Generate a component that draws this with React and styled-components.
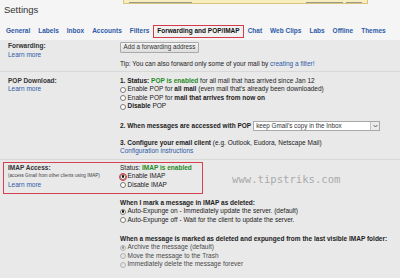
import React from "react"
import styled, { createGlobalStyle } from "styled-components"

const GlobalStyle = createGlobalStyle`
  body {
    margin: 0;
    background: #f5f5f5;
    font-family: "Liberation Sans", Arial, sans-serif;
  }
`

const Page = styled.div`
  position: relative;
  width: 400px;
  height: 278px;
  overflow: hidden;
  background: #f5f5f5;
  color: #222;
  font-size: 6.5px;
  line-height: 8.5px;
`

const NoticeBar = styled.div`
  position: absolute;
  top: 0;
  left: 123px;
  width: 233px;
  height: 3px;
  padding: 0 5px;
  display: flex;
  align-items: flex-end;
  gap: 3px;
  background: #f8eebd;
  border: 1px solid #d9c47e;
  border-top: none;
`

const NoticeButton = styled.span`
  display: block;
  width: ${(p) => p.$w}px;
  height: 1px;
  background: #9a9a8c;
  margin-left: ${(p) => (p.$push ? "auto" : "0")};
`

const Title = styled.h1`
  margin: 4px 0 0 4px;
  font-size: 9.5px;
  line-height: 12px;
  font-weight: normal;
  color: #333;
`

const TabBar = styled.nav`
  display: flex;
  margin: 9px 0 2px 2px;
`

const Tab = styled.a`
  padding: 1.25px 3px;
  border: 1px solid ${(p) => (p.$active ? "#d43b4a" : "transparent")};
  background: ${(p) => (p.$active ? "#f1f1f1" : "transparent")};
  color: ${(p) => (p.$active ? "#111" : "#2d5aa8")};
  font-weight: bold;
  white-space: nowrap;
`

const Panel = styled.div`
  background: #e9e9e9;
  min-height: 240px;
`

const Section = styled.section`
  position: relative;
  display: grid;
  grid-template-columns: 112px 1fr;
  padding: ${(p) => p.$pad || "4px 0 3px 8px"};
  border-bottom: ${(p) => (p.$last ? "none" : "1px solid #d8d8d8")};
`

const Label = styled.div`
  display: flex;
  flex-direction: column;
  font-weight: bold;
  color: #333;
`

const Hint = styled.span`
  font-weight: normal;
  font-size: 4.6px;
  color: #444;
`

const Link = styled.a`
  font-weight: normal;
  color: #2d5aa8;
`

const Body = styled.div`
  display: flex;
  flex-direction: column;
  white-space: nowrap;
`

const Block = styled.div`
  display: flex;
  flex-direction: column;
  margin-top: ${(p) => p.$top || 0}px;
`

const Line = styled.div`
  color: ${(p) => (p.$muted ? "#555" : "#222")};
`

const Strong = styled.b`
  color: ${(p) => (p.$green ? "#1f8a24" : "#222")};
`

const Button = styled.button`
  align-self: flex-start;
  height: 11px;
  width: 79px;
  padding: 0;
  font: inherit;
  font-size: 6.3px;
  color: #333;
  background: linear-gradient(#f4f4f4, #dedede);
  border: 1px solid #a9a9a9;
  border-radius: 1px;
`

const RadioRow = styled.label`
  display: flex;
  align-items: center;
  gap: 1.5px;
  color: ${(p) => (p.$disabled ? "#4a4a4a" : "#222")};
`

const Radio = styled.span`
  box-sizing: border-box;
  display: grid;
  place-items: center;
  width: 6px;
  height: 6px;
  border-radius: 50%;
  border: 1px solid ${(p) => (p.$disabled ? "#b3b3b3" : "#7a7a7a")};
  background: ${(p) => (p.$disabled ? "#e4e4e4" : "#fff")};
  outline: ${(p) => (p.$ring ? "1.3px solid #d4303e" : "none")};
  outline-offset: 0.5px;

  &::after {
    content: "";
    width: 2.6px;
    height: 2.6px;
    border-radius: 50%;
    background: ${(p) => (p.$disabled ? "#999" : "#111")};
    display: ${(p) => (p.$checked ? "block" : "none")};
  }
`

const SelectRow = styled.div`
  display: flex;
  align-items: center;
  gap: 2px;
  height: 10px;
`

const Select = styled.div`
  box-sizing: border-box;
  display: flex;
  width: 127px;
  height: 10px;
  background: #fff;
  border: 1px solid #a8a8a8;
  font-size: 6.3px;
  line-height: 8px;
  color: #333;
`

const SelectText = styled.span`
  flex: 1;
  padding-left: 2px;
`

const SelectArrow = styled.span`
  width: 8px;
  display: grid;
  place-items: center;
  border-left: 1px solid #c4c4c4;
  background: #ececec;
`

const Highlight = styled.div`
  position: absolute;
  left: 3px;
  top: 2px;
  width: 198px;
  height: 30px;
  border: 1px solid #d4404d;
  pointer-events: none;
`

const Watermark = styled.div`
  position: absolute;
  left: 232px;
  top: 173px;
  font-family: "DejaVu Sans Mono", "Liberation Mono", monospace;
  font-size: 10.6px;
  line-height: 12px;
  color: #a9a9a9;
`

function Choice({ checked, disabled, ring, children }) {
  return (
    <RadioRow $disabled={disabled}>
      <Radio $checked={checked} $disabled={disabled} $ring={ring} />
      <span>{children}</span>
    </RadioRow>
  )
}

const tabs = [
  "General",
  "Labels",
  "Inbox",
  "Accounts",
  "Filters",
  "Forwarding and POP/IMAP",
  "Chat",
  "Web Clips",
  "Labs",
  "Offline",
  "Themes",
]

export default function App() {
  return (
    <Page>
      <GlobalStyle />
      <NoticeBar>
        <NoticeButton $w={63} />
        <NoticeButton $w={37} $push />
        <NoticeButton $w={16} />
      </NoticeBar>

      <Title>Settings</Title>
      <TabBar>
        {tabs.map((t) => (
          <Tab key={t} $active={t === "Forwarding and POP/IMAP"}>
            {t}
          </Tab>
        ))}
      </TabBar>

      <Panel>
        <Section $pad="2px 0 2.5px 8px">
          <Label>
            Forwarding:
            <Link>Learn more</Link>
          </Label>
          <Body>
            <Button>Add a forwarding address</Button>
            <Block $top={7}>
              <Line>
                Tip: You can also forward only some of your mail by{" "}
                <Link>creating a filter!</Link>
              </Line>
            </Block>
          </Body>
        </Section>

        <Section $pad="4.75px 0 3.25px 8px">
          <Label>
            POP Download:
            <Link>Learn more</Link>
          </Label>
          <Body>
            <Line>
              <Strong>1. Status: </Strong>
              <Strong $green>POP is enabled</Strong> for all mail that has
              arrived since Jan 12
            </Line>
            <Choice>
              Enable POP for <Strong>all mail</Strong> (even mail that's
              already been downloaded)
            </Choice>
            <Choice>
              Enable POP for <Strong>mail that arrives from now on</Strong>
            </Choice>
            <Choice>
              <Strong>Disable</Strong> POP
            </Choice>
            <Block $top={10.25}>
              <SelectRow>
                <Strong>2. When messages are accessed with POP</Strong>
                <Select>
                  <SelectText>keep Gmail's copy in the Inbox</SelectText>
                  <SelectArrow>
                    <svg width="5" height="4" viewBox="0 0 5 4">
                      <path d="M0.6 1 L2.5 3 L4.4 1" fill="none" stroke="#555" strokeWidth="0.9" />
                    </svg>
                  </SelectArrow>
                </Select>
              </SelectRow>
            </Block>
            <Block $top={7.75}>
              <Line>
                <Strong>3. Configure your email client</Strong> (e.g. Outlook,
                Eudora, Netscape Mail)
              </Line>
              <Link>Configuration instructions</Link>
            </Block>
          </Body>
        </Section>

        <Section $pad="3.75px 0 10px 8px" $last>
          <Highlight />
          <Label>
            IMAP Access:
            <Hint>(access Gmail from other clients using IMAP)</Hint>
            <Link>Learn more</Link>
          </Label>
          <Body>
            <Line>
              Status: <Strong $green>IMAP is enabled</Strong>
            </Line>
            <Choice checked ring>
              Enable IMAP
            </Choice>
            <Choice>Disable IMAP</Choice>

            <Block $top={9.5}>
              <Strong>When I mark a message in IMAP as deleted:</Strong>
              <Choice checked>
                Auto-Expunge on - Immediately update the server. (default)
              </Choice>
              <Choice>
                Auto-Expunge off - Wait for the client to update the server.
              </Choice>
            </Block>

            <Block $top={10.5}>
              <Strong>
                When a message is marked as deleted and expunged from the last
                visible IMAP folder:
              </Strong>
              <Choice checked disabled>
                Archive the message (default)
              </Choice>
              <Choice disabled>Move the message to the Trash</Choice>
              <Choice disabled>Immediately delete the message forever</Choice>
            </Block>
          </Body>
        </Section>
      </Panel>

      <Watermark>www.tipstriks.com</Watermark>
    </Page>
  )
}
